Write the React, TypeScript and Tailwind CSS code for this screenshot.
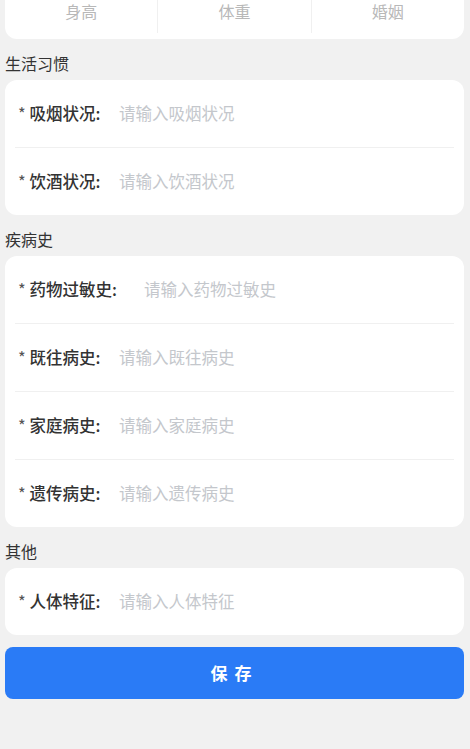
import React from 'react';

type Field = { label: string; width: string };

const habits: Field[] = [
  { label: '吸烟状况', width: 'w-[101px]' },
  { label: '饮酒状况', width: 'w-[101px]' },
];

const history: Field[] = [
  { label: '药物过敏史', width: 'w-[126px]' },
  { label: '既往病史', width: 'w-[101px]' },
  { label: '家庭病史', width: 'w-[101px]' },
  { label: '遗传病史', width: 'w-[101px]' },
];

const others: Field[] = [{ label: '人体特征', width: 'w-[101px]' }];

function FormRow({ field }: { field: Field }) {
  return (
    <div className="flex h-[67px] items-center pl-[13px]">
      <div className={`${field.width} shrink-0 text-[16.5px] font-medium text-[#333]`}>
        <span className="font-normal text-[#555]">*</span> {field.label}:
      </div>
      <div className="text-[16.5px] text-[#c4c7cc]">请输入{field.label}</div>
    </div>
  );
}

function Card({ fields }: { fields: Field[] }) {
  return (
    <div className="ml-[5px] mr-[6px] rounded-[12px] bg-white">
      {fields.map((f, i) => (
        <div key={f.label}>
          {i > 0 && <div className="mx-[10px] h-px bg-[#f0f0f0]" />}
          <FormRow field={f} />
        </div>
      ))}
    </div>
  );
}

function Heading({ children }: { children: React.ReactNode }) {
  return (
    <div className="pl-[5px] pt-[12px] pb-[5px] text-[16px] leading-[24px] text-[#333]">{children}</div>
  );
}

export default function App() {
  return (
    <div
      className="min-h-[749px] bg-[#f1f1f1]"
      style={{ fontFamily: '"Noto Sans CJK SC", "Noto Sans", sans-serif' }}
    >
      {/* 基本信息（顶部被滚出） */}
      <div className="ml-[5px] mr-[6px] flex h-[39px] rounded-b-[12px] bg-white">
        {['身高', '体重', '婚姻'].map((t, i) => (
          <div
            key={t}
            className={`flex h-[33px] flex-1 justify-center text-[16px] leading-[22px] text-[#b8b8b8] ${
              i < 2 ? 'border-r border-[#f0f0f0]' : ''
            }`}
          >
            {t}
          </div>
        ))}
      </div>

      <Heading>生活习惯</Heading>
      <Card fields={habits} />

      <Heading>疾病史</Heading>
      <Card fields={history} />

      <Heading>其他</Heading>
      <Card fields={others} />

      <div className="ml-[5px] mr-[6px] mt-[12px]">
        <button className="flex h-[52px] w-full items-center justify-center rounded-[8px] bg-[#2a7bf6] text-[17px] font-bold tracking-[7px] text-white">
          保存
        </button>
      </div>
    </div>
  );
}
